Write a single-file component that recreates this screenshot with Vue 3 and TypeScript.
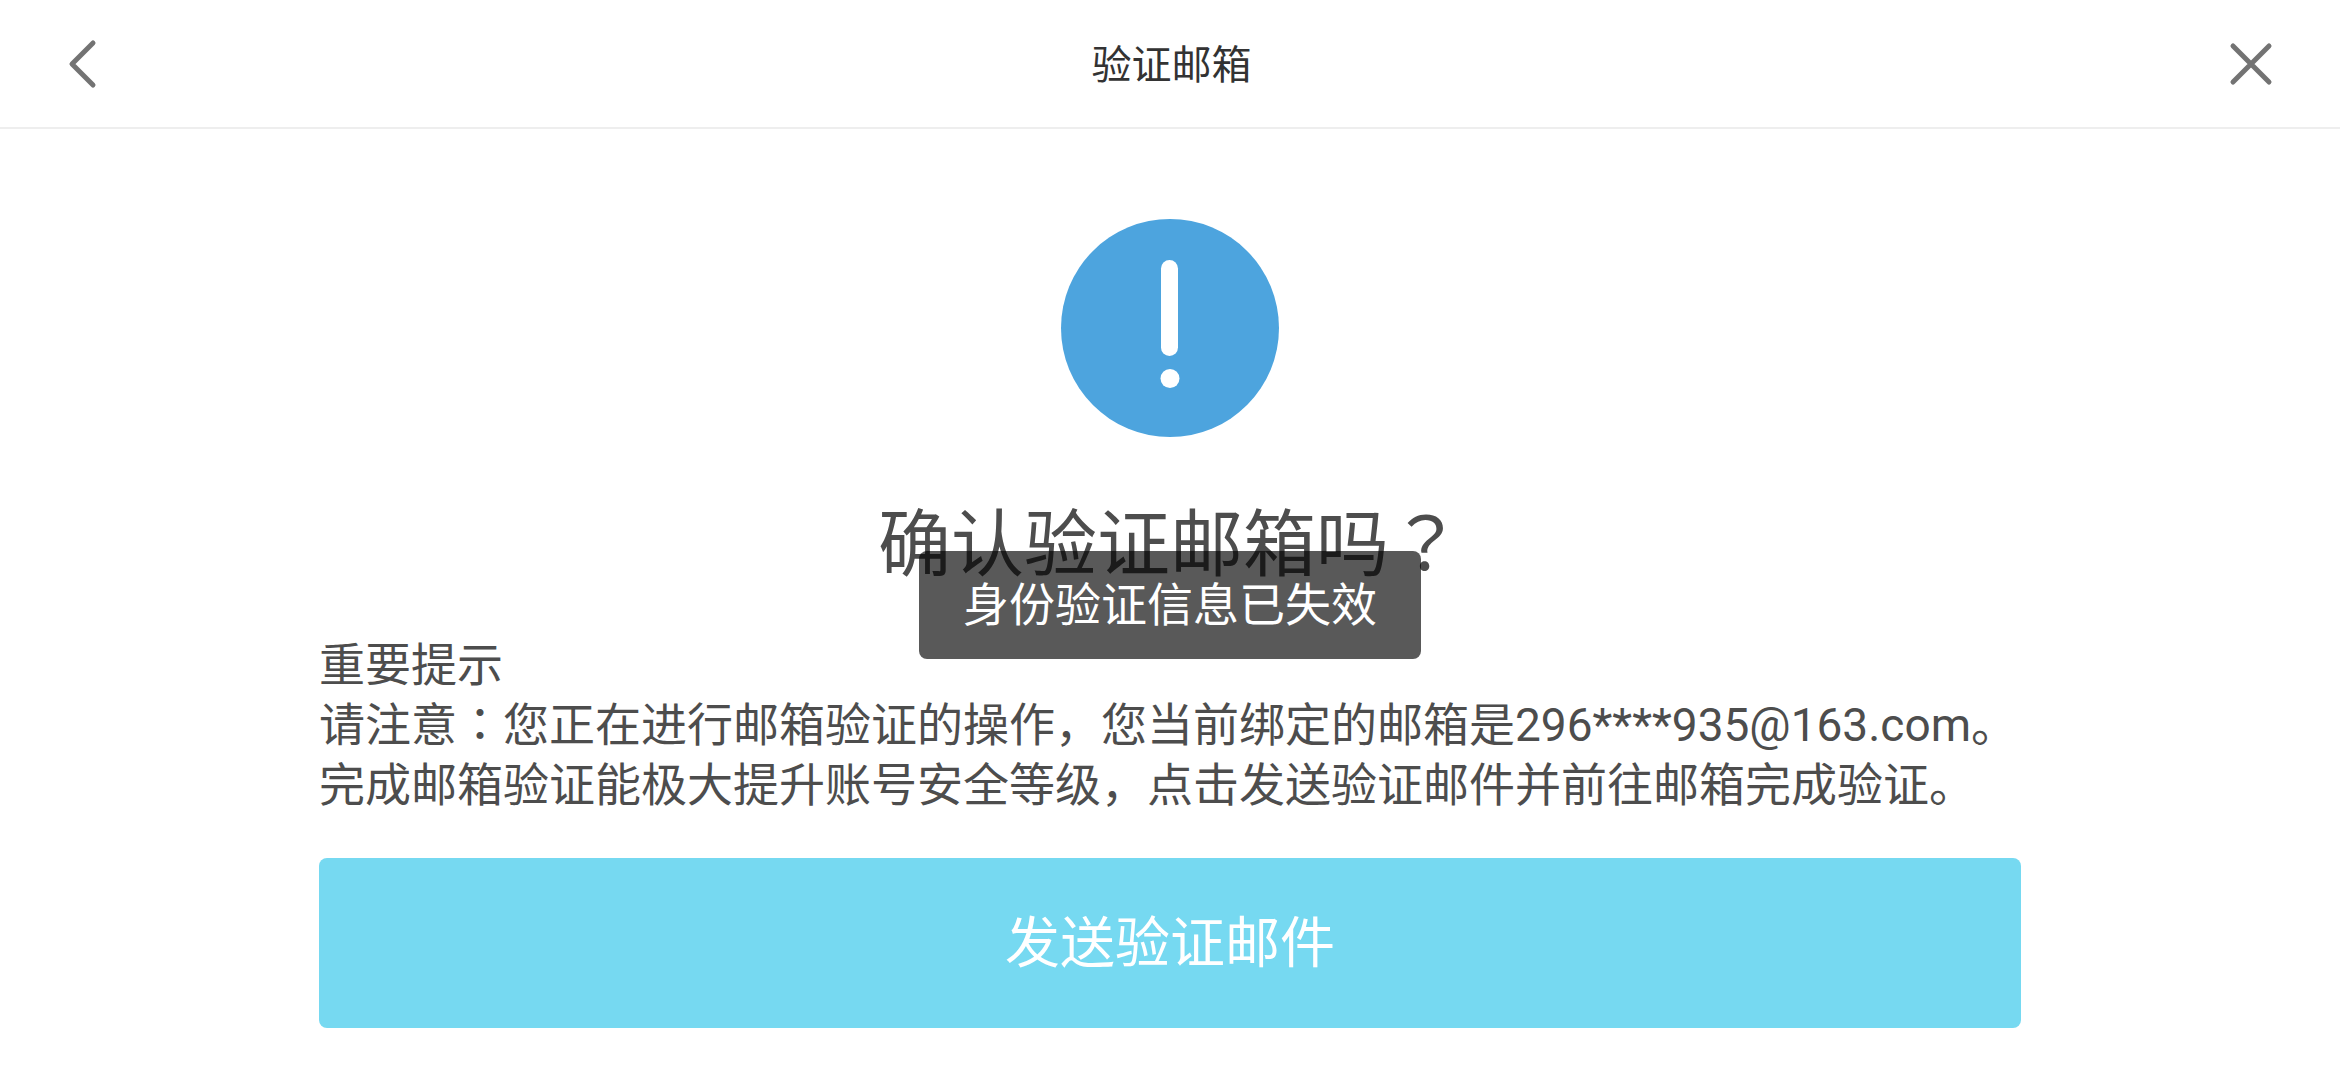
<script setup lang="ts">
import { ref } from 'vue'

const pageTitle = ref('验证邮箱')
const heading = ref('确认验证邮箱吗')
const email = ref('296****935@163.com')
const toast = ref('身份验证信息已失效')
</script>

<template>
  <div class="page">
    <header class="bar">
      <button class="icon-button" type="button" aria-label="返回">
        <svg width="40" height="56" viewBox="0 0 40 56" aria-hidden="true">
          <path d="M29 7 8 28l21 21" />
        </svg>
      </button>
      <h1 class="bar-title">{{ pageTitle }}</h1>
      <button class="icon-button" type="button" aria-label="关闭">
        <svg width="56" height="56" viewBox="0 0 56 56" aria-hidden="true">
          <path d="M10 10 46 46M46 10 10 46" />
        </svg>
      </button>
    </header>

    <main class="content">
      <svg class="notice" width="218" height="218" viewBox="0 0 218 218" aria-hidden="true">
        <circle cx="109" cy="109" r="109" fill="#4da4de" />
        <rect x="100" y="41" width="17" height="96" rx="8.500" fill="#fff" />
        <circle cx="109" cy="159.500" r="9.500" fill="#fff" />
      </svg>
      <h2 class="heading">{{ heading }}<span class="centered-mark">？</span></h2>
      <div class="tips">
        <p>重要提示</p>
        <p>请注意<span class="centered-mark">：</span>您正在进行邮箱验证的操作，您当前绑定的邮箱是{{ email }}。</p>
        <p>完成邮箱验证能极大提升账号安全等级，点击发送验证邮件并前往邮箱完成验证。</p>
      </div>
      <button class="submit" type="button">发送验证邮件</button>
    </main>

    <div class="toast" role="status">{{ toast }}</div>
  </div>
</template>

<style>
body {
  margin: 0;
  background: #fff;
}
</style>

<style scoped>
.page {
  position: relative;
  min-height: 100vh;
  box-sizing: border-box;
  color: #4d4d4d;
  font-family: Roboto, "Noto Sans CJK SC", sans-serif;
}

.bar {
  display: flex;
  align-items: center;
  justify-content: space-between;
  box-sizing: border-box;
  height: 129px;
  padding: 0 61px 0 64px;
  border-bottom: 2px solid #eee;
}

.bar-title {
  margin: 0;
  padding-top: 4px;
  color: #333;
  font-size: 40px;
  font-weight: 400;
  line-height: 60px;
}

.icon-button {
  display: flex;
  width: 56px;
  padding: 0;
  border: 0;
  background: none;
  cursor: pointer;
}

.icon-button path {
  fill: none;
  stroke: #737373;
  stroke-width: 5;
  stroke-linecap: round;
  stroke-linejoin: round;
}

.content {
  display: flex;
  flex-direction: column;
  align-items: center;
  box-sizing: border-box;
  max-width: 1702px;
  margin: 0 auto;
  padding: 90px 0 52px;
}

.heading {
  margin: 54px 0 0;
  font-size: 73px;
  font-weight: 400;
  line-height: 108px;
}

/* Full-width marks that sit in the middle of their cell */
.centered-mark {
  font-family: "Noto Sans CJK TC", sans-serif;
  line-height: 1;
}

.tips {
  align-self: stretch;
  margin-top: 36px;
  font-size: 46px;
  line-height: 60px;
}

.tips p {
  margin: 0;
}

.submit {
  align-self: stretch;
  height: 170px;
  margin-top: 43px;
  padding: 0 0 10px;
  border: 0;
  border-radius: 8px;
  background: #76d9f1;
  color: #fff;
  font-family: inherit;
  font-size: 55px;
  cursor: pointer;
}

.toast {
  position: absolute;
  top: 551px;
  left: 50%;
  transform: translateX(-50%);
  padding: 24px 44px;
  border-radius: 8px;
  background: rgba(0, 0, 0, 0.65);
  color: #fff;
  font-size: 46px;
  line-height: 60px;
  white-space: nowrap;
}
</style>
